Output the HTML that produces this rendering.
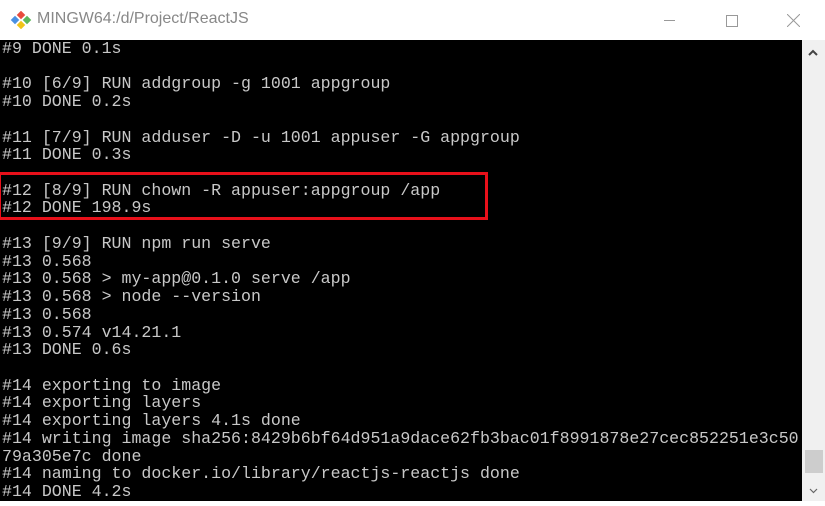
<!DOCTYPE html>
<html><head><style>
body{margin:0;width:825px;height:506px;overflow:hidden;background:#fff;position:relative;font-family:"Liberation Sans",sans-serif}
#title{position:absolute;left:0;top:0;width:825px;height:40px;background:#fff}
#title .t{position:absolute;left:37px;top:10px;font-size:16px;color:#888}
#term{position:absolute;left:0;top:40px;width:802px;height:461px;background:#000}
pre{margin:0;position:absolute;left:2px;top:0px;font-family:"Liberation Mono",monospace;font-size:16.6px;line-height:17.72px;color:#c8c8c8}
#sb{position:absolute;left:802px;top:40px;width:23px;height:461px;background:#f0f0f0}
#thumb{position:absolute;left:805px;top:450px;width:18px;height:23px;background:#cdcdcd}
#box{position:absolute;left:-2px;top:172px;width:484px;height:42px;border:3px solid #e8101a}
</style></head><body>
<div id="title">
<svg style="position:absolute;left:10px;top:11px" width="22" height="18" viewBox="0 0 22 18">
<rect x="2" y="6" width="6" height="6" fill="#4a90e2" transform="rotate(45 5 9)"/>
<rect x="8" y="1" width="6" height="6" fill="#e84c3d" transform="rotate(45 11 4)"/>
<rect x="14" y="6" width="6" height="6" fill="#5cb85c" transform="rotate(45 17 9)"/>
<rect x="8" y="11" width="6" height="6" fill="#f0c419" transform="rotate(45 11 14)"/>
</svg>
<div class="t">MINGW64:/d/Project/ReactJS</div>
<div style="position:absolute;left:664px;top:20px;width:11px;height:1px;background:#999"></div>
<div style="position:absolute;left:726px;top:15px;width:10px;height:10px;border:1px solid #999"></div>
<svg style="position:absolute;left:787px;top:14px" width="13" height="13"><path d="M0 0L13 13M13 0L0 13" stroke="#999" stroke-width="1"/></svg>
</div>
<div id="term"><pre>#9 DONE 0.1s

#10 [6/9] RUN addgroup -g 1001 appgroup
#10 DONE 0.2s

#11 [7/9] RUN adduser -D -u 1001 appuser -G appgroup
#11 DONE 0.3s

#12 [8/9] RUN chown -R appuser:appgroup /app
#12 DONE 198.9s

#13 [9/9] RUN npm run serve
#13 0.568
#13 0.568 &gt; my-app@0.1.0 serve /app
#13 0.568 &gt; node --version
#13 0.568
#13 0.574 v14.21.1
#13 DONE 0.6s

#14 exporting to image
#14 exporting layers
#14 exporting layers 4.1s done
#14 writing image sha256:8429b6bf64d951a9dace62fb3bac01f8991878e27cec852251e3c50
79a305e7c done
#14 naming to docker.io/library/reactjs-reactjs done
#14 DONE 4.2s</pre></div>
<div id="box"></div>
<div id="sb"></div>
<div id="thumb"></div>
<svg style="position:absolute;left:808px;top:49px" width="10" height="7"><path d="M1 6L5 2L9 6" stroke="#444" stroke-width="2" fill="none"/></svg>
<svg style="position:absolute;left:809px;top:488px" width="9" height="6"><path d="M1 1L4.5 4.5L8 1" stroke="#666" stroke-width="1.2" fill="none"/></svg>
</body></html>
